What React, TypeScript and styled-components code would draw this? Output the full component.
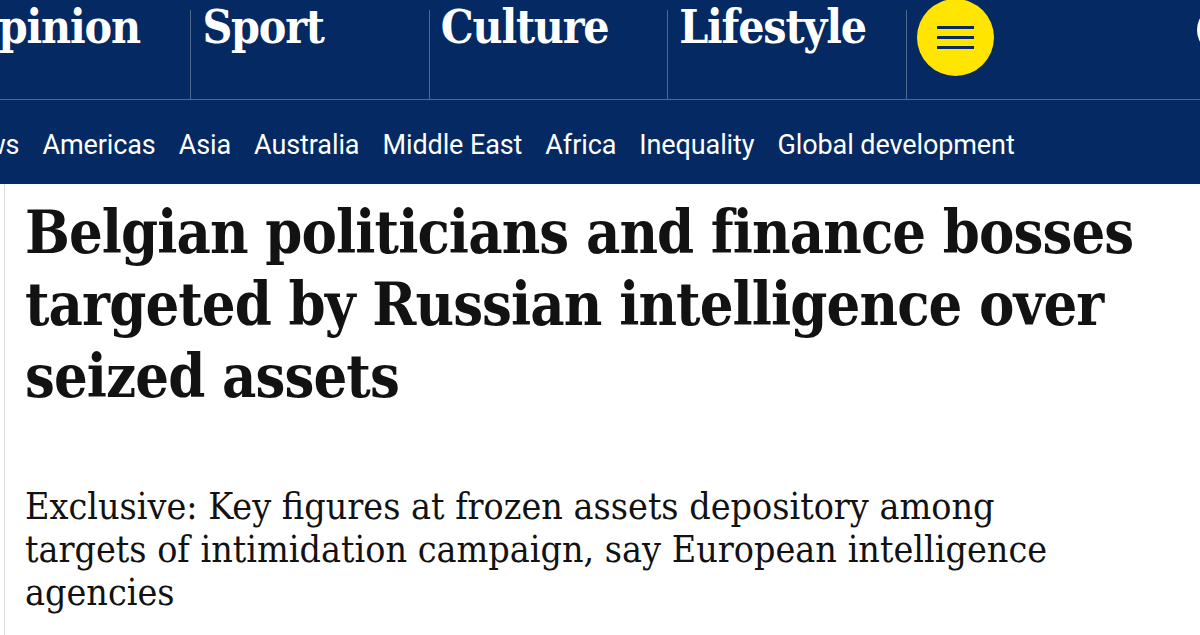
import React from "react";
import styled, { createGlobalStyle } from "styled-components";

const Global = createGlobalStyle`
  html, body {
    margin: 0;
    padding: 0;
    background: #ffffff;
    overflow: hidden;
  }
  body {
    width: 1200px;
    height: 635px;
  }
`;

const Page = styled.div`
  width: 1200px;
  height: 635px;
  overflow: hidden;
  display: flex;
  flex-direction: column;
`;

const Masthead = styled.header`
  background: #052962;
  position: relative;
`;

const Pillars = styled.nav`
  display: flex;
  height: 99px;
  margin-left: -47px;
  border-bottom: 1px solid #506991;
`;

const Pillar = styled.a`
  width: 238.4px;
  height: 89px;
  flex: none;
  margin-top: 10px;
  border-right: 1px solid #506991;
  padding-left: 11px;
  box-sizing: border-box;
  color: #ffffff;
  font-family: "DejaVu Serif", "Liberation Serif", serif;
  font-stretch: condensed;
  font-weight: 700;
  font-size: 46px;
  line-height: 1;
  letter-spacing: -1.2px;
`;

const PillarLabel = styled.span`
  display: block;
  margin-top: -6px;
`;

const MenuCell = styled.div`
  padding-left: 10px;
  flex: 1;
`;

const MenuButton = styled.button`
  width: 77px;
  height: 77px;
  margin-top: -1px;
  border-radius: 50%;
  border: none;
  background: #ffe500;
  display: flex;
  flex-direction: column;
  align-items: center;
  justify-content: center;
  gap: 7px;
  padding: 0;
`;

const Bar = styled.span`
  display: block;
  width: 37px;
  height: 3px;
  background: #052962;
`;

const EdgeButton = styled.span`
  position: absolute;
  top: 6px;
  left: 1197px;
  width: 60px;
  height: 48px;
  border-radius: 24px;
  background: #ffffff;
`;

const SubNav = styled.ul`
  display: flex;
  gap: 23px;
  list-style: none;
  margin: 0 0 0 -48px;
  padding: 0;
  height: 84px;
  align-items: center;
`;

const SubLink = styled.li`
  color: #ffffff;
  font-family: Roboto, "Open Sans", sans-serif;
  font-size: 27px;
  font-weight: 400;
  letter-spacing: -0.1px;
  white-space: nowrap;
  padding-top: 6px;
`;

const Body = styled.main`
  flex: 1;
  margin-left: 4px;
  border-left: 1px solid #dcdcdc;
  padding: 13px 0 0 20px;
`;

const Headline = styled.h1`
  margin: 0;
  color: #121212;
  font-family: "DejaVu Serif", "Liberation Serif", serif;
  font-stretch: condensed;
  font-weight: 700;
  font-size: 59px;
  line-height: 72px;
  letter-spacing: -0.9px;
  white-space: nowrap;
`;

const Standfirst = styled.p`
  margin: 72px 0 0;
  color: #121212;
  font-family: "DejaVu Serif", "Liberation Serif", serif;
  font-stretch: condensed;
  font-weight: 400;
  font-size: 37.3px;
  line-height: 43px;
  letter-spacing: 0;
  white-space: nowrap;
`;

const pillars = ["Opinion", "Sport", "Culture", "Lifestyle"];
const sections = [
  "News",
  "Americas",
  "Asia",
  "Australia",
  "Middle East",
  "Africa",
  "Inequality",
  "Global development",
];

export default function App() {
  return (
    <Page>
      <Global />
      <Masthead>
        <Pillars>
          {pillars.map((p) => (
            <Pillar key={p}>
              <PillarLabel>{p}</PillarLabel>
            </Pillar>
          ))}
          <MenuCell>
            <MenuButton aria-label="Menu">
              <Bar />
              <Bar />
              <Bar />
            </MenuButton>
          </MenuCell>
        </Pillars>
        <EdgeButton />
        <SubNav>
          {sections.map((s) => (
            <SubLink key={s}>{s}</SubLink>
          ))}
        </SubNav>
      </Masthead>
      <Body>
        <Headline>
          Belgian politicians and finance bosses
          <br />
          targeted by Russian intelligence over
          <br />
          seized assets
        </Headline>
        <Standfirst>
          Exclusive: Key figures at frozen assets depository among
          <br />
          targets of intimidation campaign, say European intelligence
          <br />
          agencies
        </Standfirst>
      </Body>
    </Page>
  );
}
